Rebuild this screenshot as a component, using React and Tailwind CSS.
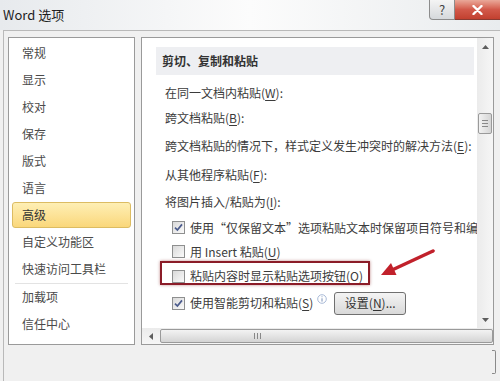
import React from "react";

const navItems = [
  "常规",
  "显示",
  "校对",
  "保存",
  "版式",
  "语言",
  "高级",
  "自定义功能区",
  "快速访问工具栏",
];

const U = ({ children }) => <span className="underline underline-offset-2">{children}</span>;

function CheckBox({ checked }) {
  return (
    <span className="w-[13px] h-[13px] shrink-0 border border-[#8e8f8f] bg-linear-to-br from-[#d9d9d9] to-[#fafafa] flex items-center justify-center">
      {checked && (
        <svg viewBox="0 0 11 11" className="w-[11px] h-[11px]">
          <path d="M2 5.6 L4.4 8 L9 2.4" stroke="#4b5b8c" strokeWidth="1.7" fill="none" />
        </svg>
      )}
    </span>
  );
}

const App = () => {
  return (
    <div className="relative w-[500px] h-[381px] overflow-hidden bg-[#f0f0f0] text-[12px] text-[#3b3b3b] font-['Noto_Sans_CJK_SC','Liberation_Sans',sans-serif]">
      {/* Title bar */}
      <div className="h-[30px] flex justify-between bg-linear-to-r from-[#e7eaed] via-[#fcfcfc] to-[#e9ecee]">
        <div className="pl-[3px] pt-[5px] text-[13px] text-[#1e1e1e]">Word 选项</div>
        <div className="flex items-start">
          <div className="w-[26px] h-[20px] border border-t-0 border-[#8c8c8c] rounded-bl-[4px] bg-linear-to-b from-[#f4f4f4] to-[#d6d9dc] flex items-center justify-center text-[13px] text-[#444]">
            ?
          </div>
          <div className="w-[45px] h-[20px] border-b border-[#8a3b32] bg-linear-to-b from-[#e9a899] via-[#d2594a] to-[#c2402f] flex items-center justify-center">
            <svg viewBox="0 0 12 10" className="w-[13px] h-[10px]">
              <path d="M2 1 L10 9 M10 1 L2 9" stroke="#fff" strokeWidth="2.4" strokeLinecap="round" />
            </svg>
          </div>
        </div>
      </div>

      {/* Frame */}
      <div className="ml-[3px] h-[351px] border-l border-t border-[#b9b9b9] flex gap-[6px] pt-[6px] pl-[4px]">
        {/* Left navigation */}
        <div className="w-[127px] h-[308px] border border-[#9a9a9a] bg-white pt-[2px] text-[#4a4a4a]">
          {navItems.map((item) => (
            <div
              key={item}
              className={
                item === "高级"
                  ? "mx-[3px] mb-[1px] h-[26px] flex items-center pl-[9px] border border-[#dcbc62] rounded-[3px] bg-linear-to-b from-[#feefb4] to-[#fad77a] text-[#333]"
                  : "mx-[3px] mb-[1px] h-[26px] flex items-center pl-[9px] border border-transparent"
              }
            >
              {item}
            </div>
          ))}
          <div className="mx-[6px] h-[1px] bg-[#e3e3e3]" />
          {["加载项", "信任中心"].map((item) => (
            <div key={item} className="mx-[3px] mb-[1px] h-[26px] flex items-center pl-[9px] border border-transparent">
              {item}
            </div>
          ))}
        </div>

        {/* Main panel */}
        <div className="w-[353px] h-[308px] border border-[#9a9a9a] bg-white flex flex-col">
          <div className="h-[290px] flex">
            <div className="flex-1 overflow-hidden pl-[14px] pr-[3px] pt-[9px] whitespace-nowrap">
              <div className="h-[28px] flex items-center pl-[6px] bg-[#eeeff2] font-semibold text-[#333]">
                剪切、复制和粘贴
              </div>
              <div className="mt-[5px]">
                <div className="h-[25px] flex items-center pl-[9px]">
                  在同一文档内粘贴(<U>W</U>):
                </div>
                <div className="h-[26px] flex items-center pl-[9px]">
                  跨文档粘贴(<U>B</U>):
                </div>
                <div className="h-[29px] flex items-center pl-[9px]">
                  跨文档粘贴的情况下，样式定义发生冲突时的解决方法(<U>E</U>):
                </div>
                <div className="h-[29px] flex items-center pl-[9px]">
                  从其他程序粘贴(<U>F</U>):
                </div>
                <div className="h-[26px] flex items-center pl-[9px]">
                  将图片插入/粘贴为(<U>I</U>):
                </div>
                <div className="h-[25px] flex items-center gap-[5px] pl-[16px]">
                  <CheckBox checked />
                  <span>使用“仅保留文本”选项粘贴文本时保留项目符号和编</span>
                </div>
                <div className="h-[23px] flex items-center gap-[5px] pl-[16px]">
                  <CheckBox />
                  <span>
                    用 Insert 粘贴(<U>U</U>)
                  </span>
                </div>
                <div className="h-[26px] flex items-center gap-[5px] pl-[16px]">
                  <CheckBox />
                  <span>
                    粘贴内容时显示粘贴选项按钮(<U>O</U>)
                  </span>
                </div>
                <div className="h-[28px] flex items-center gap-[5px] pl-[16px]">
                  <CheckBox checked />
                  <span>
                    使用智能剪切和粘贴(<U>S</U>)
                  </span>
                  <svg viewBox="0 0 10 10" className="w-[10px] h-[10px] -mt-[8px] -ml-[1px]">
                    <circle cx="5" cy="5" r="4.3" fill="none" stroke="#9fb2d2" strokeWidth="0.9" />
                    <path d="M5 4.3 V7.6 M5 2.4 V3.2" stroke="#7a90b8" strokeWidth="1" />
                  </svg>
                  <button className="ml-[2px] w-[72px] h-[23px] border border-[#707070] rounded-[3px] bg-linear-to-b from-[#f4f4f4] to-[#d9d9d9] text-[12px] text-[#333] flex items-center justify-center">
                    设置(<U>N</U>)...
                  </button>
                </div>
              </div>
            </div>

            {/* Vertical scrollbar */}
            <div className="w-[16px] flex flex-col bg-linear-to-r from-[#ebebeb] to-[#f6f6f6]">
              <div className="h-[17px] flex items-center justify-center">
                <svg viewBox="0 0 7 4" className="w-[7px] h-[4px]">
                  <path d="M0 4 L3.5 0 L7 4 Z" fill="#5d5d5d" />
                </svg>
              </div>
              <div className="flex-1 pt-[58px]">
                <div className="mx-auto w-[14px] h-[21px] border border-[#9a9a9a] rounded-[2px] bg-linear-to-r from-[#f2f2f2] to-[#d5d5d5] flex flex-col items-center justify-center gap-[2px]">
                  <div className="w-[6px] h-[1px] bg-[#888]" />
                  <div className="w-[6px] h-[1px] bg-[#888]" />
                  <div className="w-[6px] h-[1px] bg-[#888]" />
                </div>
              </div>
              <div className="h-[17px] flex items-center justify-center">
                <svg viewBox="0 0 7 4" className="w-[7px] h-[4px]">
                  <path d="M0 0 L3.5 4 L7 0 Z" fill="#5d5d5d" />
                </svg>
              </div>
            </div>
          </div>

          {/* Horizontal scrollbar */}
          <div className="h-[16px] flex bg-linear-to-b from-[#ebebeb] to-[#f6f6f6]">
            <div className="w-[18px] flex items-center justify-center">
              <svg viewBox="0 0 4 7" className="w-[4px] h-[7px]">
                <path d="M4 0 L0 3.5 L4 7 Z" fill="#5d5d5d" />
              </svg>
            </div>
            <div className="flex-1 my-[1px] border border-[#9a9a9a] rounded-[2px] bg-linear-to-b from-[#f3f3f3] to-[#d4d4d4] flex items-center pl-[93px] gap-[2px]">
              <div className="w-[1px] h-[6px] bg-[#888]" />
              <div className="w-[1px] h-[6px] bg-[#888]" />
              <div className="w-[1px] h-[6px] bg-[#888]" />
            </div>
          </div>
        </div>
      </div>

      {/* Edge of a button at the bottom right */}
      <div className="absolute right-[4px] top-[350px] w-[4px] h-[24px] border-r border-t border-b border-[#8a8a8a] rounded-r-[2px]" />

      {/* Annotation: red highlight box */}
      <div className="absolute left-[160px] top-[261px] w-[210px] h-[24px] border-2 border-[#8b1c28] shadow-[0_0_3px_rgba(120,0,0,0.45)]" />

      {/* Annotation: red arrow */}
      <svg className="absolute left-[378px] top-[246px] w-[60px] h-[34px]" viewBox="0 0 60 34">
        <path d="M14 24 L55 5" stroke="#c1212b" strokeWidth="3.5" strokeLinecap="round" />
        <polygon points="3,29 18.5,29 13,17" fill="#c1212b" />
      </svg>
    </div>
  );
};

export default App;
